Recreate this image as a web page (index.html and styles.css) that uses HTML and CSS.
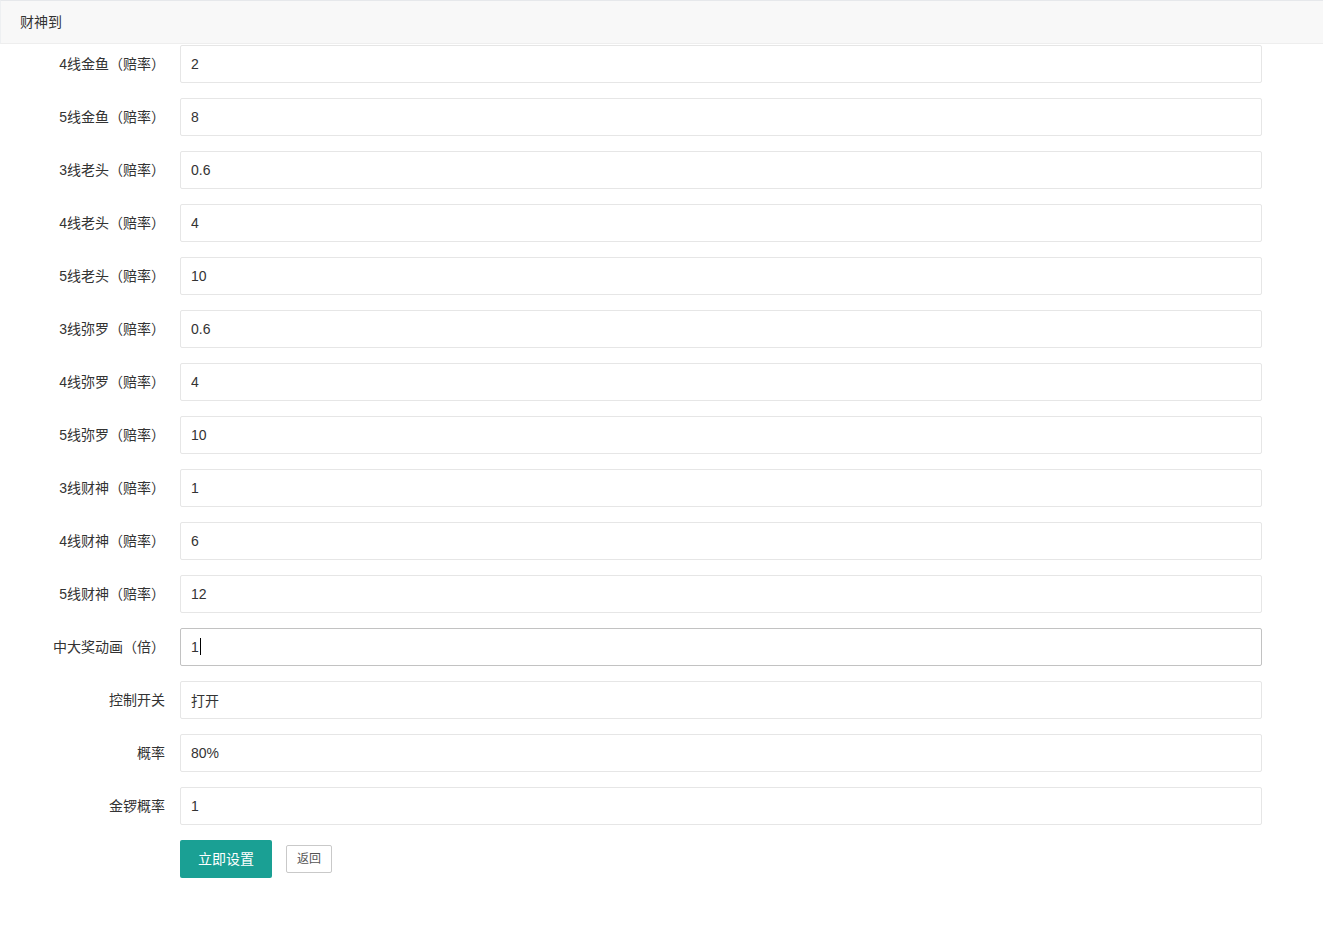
FILE: index.html
```html
<!DOCTYPE html>
<html lang="zh-CN">
<head>
  <meta charset="UTF-8" />
  <meta name="viewport" content="width=device-width, initial-scale=1.0"/>
  <title>财神到</title>
  <link rel="stylesheet" href="styles.css">
</head>
<body>

  <div class="card-header">财神到</div>

  <form class="form">
    <div class="form-item"><label class="form-label">4线金鱼（赔率）</label><input class="input" type="text" value="2"></div>
    <div class="form-item"><label class="form-label">5线金鱼（赔率）</label><input class="input" type="text" value="8"></div>
    <div class="form-item"><label class="form-label">3线老头（赔率）</label><input class="input" type="text" value="0.6"></div>
    <div class="form-item"><label class="form-label">4线老头（赔率）</label><input class="input" type="text" value="4"></div>
    <div class="form-item"><label class="form-label">5线老头（赔率）</label><input class="input" type="text" value="10"></div>
    <div class="form-item"><label class="form-label">3线弥罗（赔率）</label><input class="input" type="text" value="0.6"></div>
    <div class="form-item"><label class="form-label">4线弥罗（赔率）</label><input class="input" type="text" value="4"></div>
    <div class="form-item"><label class="form-label">5线弥罗（赔率）</label><input class="input" type="text" value="10"></div>
    <div class="form-item"><label class="form-label">3线财神（赔率）</label><input class="input" type="text" value="1"></div>
    <div class="form-item"><label class="form-label">4线财神（赔率）</label><input class="input" type="text" value="6"></div>
    <div class="form-item"><label class="form-label">5线财神（赔率）</label><input class="input" type="text" value="12"></div>
    <div class="form-item"><label class="form-label">中大奖动画（倍）</label><div class="input focus">1<span class="caret"></span></div></div>
    <div class="form-item"><label class="form-label">控制开关</label><input class="input" type="text" value="打开"></div>
    <div class="form-item"><label class="form-label">概率</label><input class="input" type="text" value="80%"></div>
    <div class="form-item"><label class="form-label">金锣概率</label><input class="input" type="text" value="1"></div>

    <div class="form-item form-actions">
      <button class="btn" type="button">立即设置</button>
      <button class="btn btn-primary" type="button">返回</button>
    </div>
  </form>

</body>
</html>
```

FILE: styles.css
```css
* { margin: 0; padding: 0; box-sizing: border-box; }
body {
  font-family: "Liberation Sans", "Noto Sans CJK SC", sans-serif;
  font-size: 14px;
  color: #333;
  background: #fff;
}
.card-header {
  height: 44px;
  line-height: 42px;
  padding: 0 19px;
  background: #f8f8f8;
  border-top: 1px solid #e6e8eb;
  border-left: 1px solid #eef0f2;
  border-bottom: 1px solid #eee;
  color: #333;
}
.form {
  padding: 1px 61px 40px 0;
}
.form-item {
  display: flex;
  align-items: center;
  margin-bottom: 15px;
}
.form-label {
  width: 180px;
  flex-shrink: 0;
  padding: 9px 15px;
  line-height: 20px;
  text-align: right;
  color: #333;
}
.input {
  flex: 1;
  height: 38px;
  padding-left: 10px;
  border: 1px solid #e6e6e6;
  border-radius: 2px;
  background: #fff;
  color: #333;
  font: inherit;
  line-height: 36px;
  outline: none;
}
.input.focus {
  border-color: #c2c2c2;
}
.caret {
  display: inline-block;
  width: 1px;
  height: 17px;
  margin-left: 1px;
  vertical-align: -3px;
  background: #000;
}
.form-actions {
  padding-left: 180px;
  gap: 14px;
}
.btn {
  height: 38px;
  padding: 0 18px;
  border: none;
  border-radius: 2px;
  background: #1aa094;
  color: #fff;
  font: inherit;
  line-height: 38px;
  cursor: pointer;
}
.btn-primary {
  height: 28px;
  padding: 0 10px;
  border: 1px solid #c9c9c9;
  background: #fff;
  color: #555;
  font-size: 12px;
  line-height: 26px;
}
```
